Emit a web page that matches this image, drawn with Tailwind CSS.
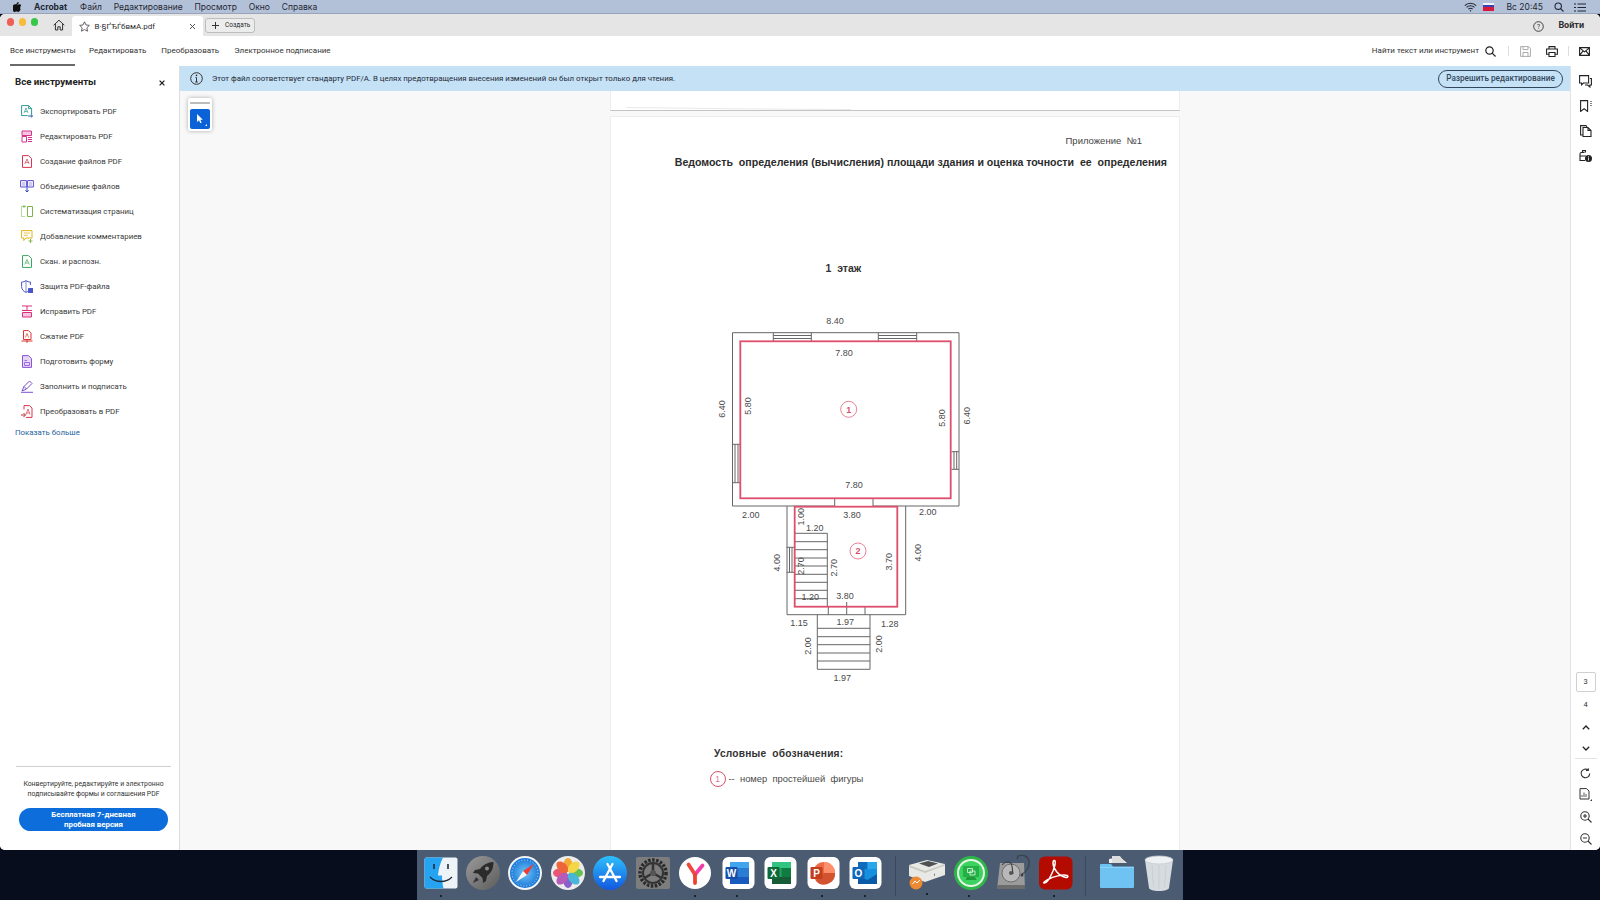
<!DOCTYPE html>
<html lang="ru">
<head>
<meta charset="utf-8">
<title>Acrobat</title>
<script src="https://cdn.jsdelivr.net/npm/@tailwindcss/browser@4"></script>
</head>
<body>
<div class="w-[1600px] h-[900px] overflow-hidden flex flex-col bg-[#070d1c] font-['Roboto',sans-serif] text-[#2c2c2c]">

  <!-- macOS menu bar -->
  <header class="h-[14px] shrink-0 bg-[#b3c1d8] border-b border-[#97a4b9] pt-[1px] flex items-center text-[8.500px] leading-none text-[#1f2733] font-['Inter',sans-serif]">
    <svg class="ml-[13px] w-[8px] h-[10px]" viewBox="0 0 16 20"><path d="M11.3 0c.2 1.5-.4 2.8-1.2 3.8-.9 1-2.1 1.6-3.2 1.5-.2-1.4.5-2.9 1.2-3.7C9 .7 10.300 0 11.300 0zM15.300 14.600c-.5 1.100-.7 1.600-1.300 2.500-.9 1.300-2.100 2.900-3.600 2.900-1.300 0-1.700-.8-3.500-.8s-2.200.8-3.500.8c-1.500 0-2.600-1.400-3.500-2.700C-1.500 13.700-1.700 9.400 0 7.100 1.200 5.500 3 4.600 4.600 4.600c1.700 0 2.800 1 4.200 1 1.400 0 2.200-1 4.200-1 1.500 0 3.100.8 4.200 2.200-3.700 2-3.100 7.300-1.900 7.800z" fill="#111"/></svg>
    <span class="ml-[13px] font-bold">Acrobat</span>
    <nav class="ml-[13px] flex gap-[11.800px]"><span>Файл</span><span>Редактирование</span><span>Просмотр</span><span>Окно</span><span>Справка</span></nav>
    <div class="ml-auto flex items-center">
      <svg class="w-[13px] h-[10px]" viewBox="0 0 13 10" fill="none" stroke="#1f2733" stroke-width="1.100"><path d="M.8 3.600a8 8 0 0 1 11.400 0M2.600 5.400a5.400 5.400 0 0 1 7.800 0M4.400 7.100a2.900 2.900 0 0 1 4.200 0"/><circle cx="6.500" cy="8.800" r=".7" fill="#1f2733" stroke="none"/></svg>
      <span class="ml-[6px] w-[11px] h-[8px] flex flex-col"><span class="h-[2px] bg-[#f2f2f6]"></span><span class="h-[2px] bg-[#3b3fb0]"></span><span class="h-[4px] bg-[#d8193a]"></span></span>
      <span class="ml-[13px]">Вс 20:45</span>
      <svg class="ml-[11px] w-[10px] h-[10px]" viewBox="0 0 10 10" fill="none" stroke="#1f2733" stroke-width="1.100"><circle cx="4.200" cy="4.200" r="3.200"/><path d="M6.600 6.600L9.500 9.500"/></svg>
      <svg class="ml-[10px] mr-[14px] w-[12px] h-[9px]" viewBox="0 0 12 9" stroke="#1f2733" stroke-width="1.100"><path d="M3.500 1H12M3.500 4.500H12M3.500 8H12M0 1H2M0 4.500H2M0 8H2"/></svg>
    </div>
  </header>

  <!-- Acrobat window -->
  <div class="h-[836px] shrink-0 flex flex-col rounded-[5px] overflow-hidden bg-white">
    <!-- tab bar -->
    <div class="h-[22px] shrink-0 bg-[#e5e5e5] flex items-center relative">
      <span class="ml-[6.500px] w-[7.500px] h-[7.500px] -mt-[6px] rounded-full bg-[#ee5f58]"></span>
      <span class="ml-[4.500px] w-[7.500px] h-[7.500px] -mt-[6px] rounded-full bg-[#f6bc3a]"></span>
      <span class="ml-[4.500px] w-[7.500px] h-[7.500px] -mt-[6px] rounded-full bg-[#37c64a]"></span>
      <svg class="ml-[15px] w-[12px] h-[12px]" viewBox="0 0 12 12" fill="none" stroke="#333" stroke-width="1"><path d="M.7 6.200L6 1.200l5.300 5M2.400 5v6h2.400V7.800h2.400V11h2.400V5"/></svg>
      <div class="ml-[7px] w-[131px] h-[20px] self-end bg-white rounded-t-[3px] flex items-center text-[8px]">
        <svg class="ml-[7px] w-[11px] h-[11px]" viewBox="0 0 12 12" fill="none" stroke="#444" stroke-width=".9"><path d="M6 .9l1.600 3.400 3.700.5-2.700 2.600.7 3.700L6 9.300l-3.300 1.800.7-3.700L.7 4.800l3.700-.5z"/></svg>
        <span class="ml-[4.500px] pt-[1px]">В·§ҐЂЃбвмА.pdf</span>
        <svg class="ml-auto mr-[7px] w-[7px] h-[7px]" viewBox="0 0 7 7" stroke="#555" stroke-width="1"><path d="M1 1l5 5M6 1L1 6"/></svg>
      </div>
      <div class="ml-[2px] w-[50px] h-[15px] rounded-[3px] border border-[#bdbdbd] bg-[#ececec] flex items-center text-[6.500px]">
        <svg class="ml-[6px] w-[7px] h-[7px]" viewBox="0 0 7 7" stroke="#333" stroke-width="1"><path d="M3.500 0v7M0 3.500h7"/></svg>
        <span class="ml-[6px] pt-[1px]">Создать</span>
      </div>
      <div class="ml-auto flex items-center pt-[2px]">
        <svg class="w-[11px] h-[11px]" viewBox="0 0 11 11" fill="none" stroke="#333" stroke-width=".9"><circle cx="5.500" cy="5.500" r="4.800"/><text x="5.500" y="7.800" font-size="6.500" text-anchor="middle" fill="#333" stroke="none">?</text></svg>
        <span class="ml-[14px] mr-[16px] text-[9px] font-bold">Войти</span>
      </div>
    </div>

    <!-- toolbar -->
    <div class="h-[30px] shrink-0 bg-white flex items-center text-[8px] text-[#333]">
      <div class="ml-[10px] h-full w-[65px] flex items-center border-b-[2px] border-[#6a6a6a] pt-[2px] whitespace-nowrap">Все инструменты</div>
      <span class="ml-[14px]">Редактировать</span>
      <span class="ml-[15px]">Преобразовать</span>
      <span class="ml-[15px]">Электронное подписание</span>
      <div class="ml-auto flex items-center">
        <span>Найти текст или инструмент</span>
        <svg class="ml-[6px] w-[11px] h-[11px]" viewBox="0 0 11 11" fill="none" stroke="#222" stroke-width="1.200"><circle cx="4.500" cy="4.500" r="3.700"/><path d="M7.200 7.200L10.500 10.500"/></svg>
        <span class="ml-[12px] w-px h-[10px] bg-[#ddd]"></span>
        <svg class="ml-[11px] w-[11px] h-[11px]" viewBox="0 0 11 11" fill="none" stroke="#aaa" stroke-width="1"><path d="M.6.6h8l1.800 1.800v8H.6zM3 .6v3h5v-3M3 10.400V6.500h5v3.900"/></svg>
        <svg class="ml-[15px] w-[12px] h-[11px]" viewBox="0 0 12 11" fill="none" stroke="#222" stroke-width="1.100"><path d="M3 3V.6h6V3M3 8.200H.6V3h10.800v5.200H9M3 6.500h6v4H3z"/></svg>
        <span class="ml-[10px] w-px h-[10px] bg-[#ddd]"></span>
        <svg class="ml-[10px] mr-[10px] w-[11px] h-[9px]" viewBox="0 0 11 9" fill="none" stroke="#222" stroke-width="1.100"><path d="M.6.6h9.800v7.800H.6zM.6.9l4.900 4 4.900-4M.6 8.200l3.400-4M10.400 8.200l-3.400-4"/></svg>
      </div>
    </div>

    <!-- main -->
    <div class="flex-1 min-h-0 flex">
      <!-- left tool panel -->
      <aside class="w-[180px] shrink-0 border-r border-[#dedede] flex flex-col bg-white text-[7.850px] text-[#3a3a3a]">
        <div class="h-[33px] shrink-0 flex items-center pl-[15px] pr-[14px] text-[9.700px] font-bold text-[#222]">
          <span>Все инструменты</span>
          <svg class="ml-auto w-[6px] h-[6px]" viewBox="0 0 6 6" stroke="#222" stroke-width="1.300"><path d="M.6.6l4.800 4.800M5.400.6L.6 5.400"/></svg>
        </div>
        <div class="h-[25px] flex items-center pl-[21px] gap-[7px]"><svg class="w-[12px] h-[13px]" viewBox="0 0 12 13" fill="none" stroke="#2f9d94"><path d="M.6.600h7l3 3v6M.6.600v10h6M7.600 .6v3h3"/><path d="M7 11h4.500M9.800 9.500l1.700 1.500-1.700 1.500" stroke="#2a5f9f"/><path d="M3 8l2-5 2 5M3.800 6.500h2.500" stroke-width=".7"/></svg><span>Экспортировать PDF</span></div>
        <div class="h-[25px] flex items-center pl-[21px] gap-[7px]"><svg class="w-[12px] h-[13px]" viewBox="0 0 12 13" fill="none" stroke="#d2358e"><path d="M1 1h9.500v4.500H1z" fill="#f6c6df"/><path d="M1 6.500h4.500v5.500H1zM7 7.500h4M7 9.500h4M7 11.500h4"/></svg><span>Редактировать PDF</span></div>
        <div class="h-[25px] flex items-center pl-[21px] gap-[7px]"><svg class="w-[12px] h-[13px]" viewBox="0 0 12 13" fill="none" stroke="#d8354f"><path d="M1.500.6h6l3 3v8.800h-9z"/><path d="M3.800 9l2.200-5 2.200 5M4.600 7.400h2.800" stroke-width=".7"/></svg><span>Создание файлов PDF</span></div>
        <div class="h-[25px] flex items-center pl-[20px] gap-[6px]"><svg class="w-[14px] h-[13px]" viewBox="0 0 14 13" fill="none" stroke="#5a4fd0"><path d="M.6.600h5.800v6.400H.6zM7.600.6h5.800v6.400H7.600z"/><path d="M2 3h3M2 5h3M9 3h3M9 5h3" stroke-width=".6"/><path d="M7 7v5M5.300 10.300L7 12l1.700-1.700" stroke="#3147b8"/></svg><span>Объединение файлов</span></div>
        <div class="h-[25px] flex items-center pl-[21px] gap-[7px]"><svg class="w-[12px] h-[13px]" viewBox="0 0 12 13" fill="none" stroke="#7ab648"><path d="M6.500 1.500h5v10h-5z"/><path d="M4.500 1.500h-4v10h4" stroke-dasharray="1 1"/><path d="M3 0v3M1.500 1.500h3" stroke-width=".8"/></svg><span>Систематизация страниц</span></div>
        <div class="h-[25px] flex items-center pl-[21px] gap-[7px]"><svg class="w-[12px] h-[13px]" viewBox="0 0 12 13" fill="none" stroke="#e2b419"><path d="M.6.600h10.400v7.400H5L2.800 10.500V8H.6z"/><path d="M2.800 3h6M2.800 5.300h4" stroke-width=".8"/><path d="M9.500 9v4M7.500 11h4" stroke="#7bb23f" stroke-width=".9"/></svg><span>Добавление комментариев</span></div>
        <div class="h-[25px] flex items-center pl-[21px] gap-[7px]"><svg class="w-[12px] h-[13px]" viewBox="0 0 12 13" fill="none" stroke="#3ca65f"><path d="M1.500.6h6l3 3v8.800h-9z"/><path d="M3.800 9.500l2.200-5 2.200 5M4.600 8h2.800" stroke-width=".7"/></svg><span>Скан. и распозн.</span></div>
        <div class="h-[25px] flex items-center pl-[21px] gap-[7px]"><svg class="w-[12px] h-[13px]" viewBox="0 0 12 13" fill="none" stroke="#4a55c8"><path d="M5 .6c-1.300 1-2.800 1.400-4.400 1.400v4.500c0 3 2 5 4.400 5.900 .9-.3 1.600-.8 2.200-1.300"/><path d="M5 .6c1.300 1 2.800 1.400 4.400 1.400v3"/><path d="M5 .6v11.800" stroke-width=".7"/><path d="M7.500 8.500h4.500v4H7.500z" fill="#4a55c8"/></svg><span>Защита PDF-файла</span></div>
        <div class="h-[25px] flex items-center pl-[21px] gap-[7px]"><svg class="w-[12px] h-[13px]" viewBox="0 0 12 13" fill="none" stroke="#d6337c"><path d="M1 1h10M1 5.500h10M6 1v4.500"/><path d="M1.500 7.500h9v4.500h-9z" fill="#f6c6df"/></svg><span>Исправить PDF</span></div>
        <div class="h-[25px] flex items-center pl-[21px] gap-[7px]"><svg class="w-[12px] h-[13px]" viewBox="0 0 12 13" fill="none" stroke="#d8352f"><path d="M2.500.6h5l2.500 2.500v6.400h-7.500z"/><path d="M4.300 7.500L6 3.500l1.700 4" stroke-width=".7"/><path d="M.5 11h11M6 9.500v3.400" /></svg><span>Сжатие PDF</span></div>
        <div class="h-[25px] flex items-center pl-[21px] gap-[7px]"><svg class="w-[12px] h-[13px]" viewBox="0 0 12 13" fill="none" stroke="#8b54d4"><path d="M1.500.6h6l3 3v8.800h-9z" fill="#e4d6f7"/><path d="M3.500 7.500h5v3h-5zM3.500 5.500h2.500" stroke-width=".8"/></svg><span>Подготовить форму</span></div>
        <div class="h-[25px] flex items-center pl-[21px] gap-[7px]"><svg class="w-[12px] h-[13px]" viewBox="0 0 12 13" fill="none" stroke="#7a4fd0"><path d="M1 11L3 6.500 8.500 1l2.500 2.500-5.500 5.500z"/><path d="M3 6.500l2.500 2.500M0 12.300h12"/></svg><span>Заполнить и подписать</span></div>
        <div class="h-[25px] flex items-center pl-[21px] gap-[7px]"><svg class="w-[12px] h-[13px]" viewBox="0 0 12 13" fill="none" stroke="#d8354f"><path d="M3 4.500V.6h5.500L11 3v9.400H5"/><path d="M5 9.500L7 4l2 5.500M5.700 8h2.600" stroke-width=".7"/><path d="M0 10h4M2.500 8l2 2-2 2" stroke="#b82e2e"/></svg><span>Преобразовать в PDF</span></div>
        <div class="h-[17px] flex items-center pl-[15px] text-[#1d5f9c]">Показать больше</div>
        <div class="mt-auto ml-[16px] mr-[8px] border-t border-[#cfcfcf] pt-[13px] pb-[19px]">
          <p class="text-[6.850px] leading-[9.500px] text-center text-[#333] whitespace-nowrap">Конвертируйте, редактируйте и электронно<br>подписывайте формы и соглашения PDF</p>
          <div class="mt-[9px] mx-[3px] h-[23px] rounded-[11.500px] bg-[#0d6edb] flex items-center justify-center text-center text-[7.900px] leading-[10px] font-bold text-white">Бесплатная 7-дневная<br>пробная версия</div>
        </div>
      </aside>

      <!-- centre -->
      <section class="flex-1 min-w-0 flex flex-col">
        <div class="h-[25px] shrink-0 bg-[#c5e1f6] flex items-center text-[7.870px] text-[#1f2a36]">
          <svg class="ml-[10px] w-[13px] h-[13px]" viewBox="0 0 13 13" fill="none" stroke="#333" stroke-width="1"><circle cx="6.500" cy="6.500" r="5.800"/><path d="M6.500 5.500v4.500M5.200 10h2.600M5.500 5.500h1" stroke-width="1"/><circle cx="6.500" cy="3.400" r=".8" fill="#333" stroke="none"/></svg>
          <span class="ml-[9px]">Этот файл соответствует стандарту PDF/A. В целях предотвращения внесения изменений он был открыт только для чтения.</span>
          <span class="ml-auto mr-[7px] w-[125px] h-[18px] rounded-full border border-[#33475b] flex items-center justify-center text-[8.200px] font-medium text-[#33475b]">Разрешить редактирование</span>
        </div>
        <div class="flex-1 min-h-0 relative bg-[#f8f8f8] flex flex-col gap-[5px] pl-[430px] overflow-hidden">
          <!-- floating select tool -->
          <div class="absolute left-[8px] top-[7px] w-[24px] h-[33px] bg-white rounded-[2px] shadow-[0_0_4px_rgba(0,0,0,0.3)] flex flex-col items-center">
            <span class="mt-[3.500px] w-[20px] h-[2px] bg-[#bcbcbc]"></span>
            <span class="mt-[5px] w-[20px] h-[20px] rounded-[2px] bg-[#0b62d6] flex items-center justify-center">
              <svg class="w-[16px] h-[16px]" viewBox="0 0 16 16" fill="#fff"><path d="M5 3v8l2-1.800 1.300 3 1.300-.6-1.300-2.900h2.500z"/><path d="M15 13v2h-2z"/></svg>
            </span>
          </div>
          <!-- previous page tail -->
          <div class="w-[570px] h-[20px] shrink-0 bg-white border-x border-[#ececec] border-b border-b-[#c4c4c4]">
            <svg class="block w-[568px] h-[19px]" viewBox="0 0 568 19" fill="none" stroke-width=".8"><path d="M15 16.500C70 17 110 18 240 18.500" stroke="#e2e2e2"/></svg>
          </div>
          <!-- current page -->
          <div class="w-[570px] flex-1 bg-white border border-[#ececec] border-b-0 font-['Liberation_Sans',sans-serif] text-[#333] overflow-hidden">
            <p class="mt-[18px] h-[12px] leading-[12px] text-[9.500px] text-right pr-[37px] text-[#444]">Приложение&nbsp; №1</p>
            <p class="mt-[9px] h-[12px] leading-[12px] text-[10.600px] font-bold text-right pr-[12px] text-[#2c2c2c] whitespace-nowrap">Ведомость&nbsp; определения (вычисления) площади здания и оценка точности&nbsp; ее&nbsp; определения</p>
            <p class="mt-[94px] ml-[214.500px] h-[12px] leading-[12px] text-[10.500px] font-bold text-[#333] whitespace-nowrap">1&nbsp; этаж</p>
            <svg class="block mt-[6px] w-[570px] h-[415px] font-['Liberation_Sans',sans-serif]" viewBox="611 280 570 415" fill="none" stroke-width="1">
              <g stroke="#666">
                <path d="M787 506H732.500V332.700H959V506H905.700"/>
                <path d="M787 506V614.700H905.700V506M834.700 506H787M873 506H905.700"/>
                <path d="M773.300 332.700v8.600M811.300 332.700v8.600M773.300 335.500h38M773.300 338.500h38M878.300 332.700v8.600M916.700 332.700v8.600M878.300 335.500h38.400M878.300 338.500h38.400"/>
                <path d="M732.500 444.300h8M732.500 482.700h8M735 444.300v38.400M738 444.300v38.400"/>
                <path d="M951.500 451.700H959M951.500 469.300H959M954 451.700v17.600M956.700 451.700v17.600"/>
                <path d="M834.700 498.500V506M873 498.500V506"/>
                <path d="M786.700 547.300h8M786.700 572.300h8M789.500 547.300v25M792 547.300v25"/>
                <path d="M827.300 533.300V606.700M794.700 533.300h32.600M794.700 541.700h32.600M794.700 549.700h32.600M794.700 558h32.600M794.700 566h32.600M794.700 574.300h32.600M794.700 582.300h32.600M794.700 590.300h32.600M794.700 598.700h32.600"/>
                <path d="M828.300 606.700v8M865 606.700v8M846.700 602v12.700"/>
                <path d="M817.300 614.700V669.300H870V614.700M817.300 628.300H870M817.300 636.700H870M817.300 644.700H870M817.300 653H870M817.300 661H870"/>
              </g>
              <g stroke="#dd4f6c" stroke-width="1.800">
                <rect x="740.300" y="341.300" width="210.400" height="157"/>
                <rect x="794.700" y="506.700" width="102.600" height="100"/>
              </g>
              <g stroke="#dd4f6c" stroke-width=".7">
                <circle cx="848.700" cy="409.300" r="8"/>
                <circle cx="858" cy="551" r="8"/>
              </g>
              <g font-size="9" fill="#dd4f6c" text-anchor="middle" font-weight="bold">
                <text x="848.700" y="412.500">1</text>
                <text x="858" y="554.200">2</text>
              </g>
              <g font-size="9" fill="#4a4a4a" text-anchor="middle">
                <text x="835" y="324">8.40</text>
                <text x="844" y="356">7.80</text>
                <text x="854" y="488">7.80</text>
                <text x="750.700" y="517.700">2.00</text>
                <text x="852" y="517.700">3.80</text>
                <text x="927.700" y="514.700">2.00</text>
                <text x="814.700" y="531.300">1.20</text>
                <text x="810.300" y="600.300">1.20</text>
                <text x="845" y="599">3.80</text>
                <text x="799" y="626.300">1.15</text>
                <text x="845.300" y="624.700">1.97</text>
                <text x="889.700" y="627">1.28</text>
                <text x="842.300" y="681.300">1.97</text>
                <text transform="translate(725 409) rotate(-90)">6.40</text>
                <text transform="translate(751 406) rotate(-90)">5.80</text>
                <text transform="translate(945 418) rotate(-90)">5.80</text>
                <text transform="translate(970 415.700) rotate(-90)">6.40</text>
                <text transform="translate(804 516.700) rotate(-90)">1.00</text>
                <text transform="translate(779.700 562.700) rotate(-90)">4.00</text>
                <text transform="translate(804 566) rotate(-90)">2.70</text>
                <text transform="translate(837.300 567.700) rotate(-90)">2.70</text>
                <text transform="translate(892.300 561.700) rotate(-90)">3.70</text>
                <text transform="translate(921.300 552.700) rotate(-90)">4.00</text>
                <text transform="translate(810.700 646) rotate(-90)">2.00</text>
                <text transform="translate(882 644) rotate(-90)">2.00</text>
              </g>
            </svg>
            <p class="mt-[53px] ml-[103px] h-[12px] leading-[12px] text-[10.200px] font-bold tracking-[0.2px] text-[#333] whitespace-nowrap">Условные&nbsp; обозначения:</p>
            <div class="mt-[11px] ml-[98.500px] h-[16px] flex items-center text-[9.400px] text-[#4a4a4a] whitespace-nowrap">
              <span class="w-[16px] h-[16px] rounded-full border-[1.300px] border-[#dd4f6c] flex items-center justify-center text-[8.500px] text-[#dd7a8e]">1</span>
              <span class="ml-[3px]">--&nbsp; номер&nbsp; простейшей&nbsp; фигуры</span>
            </div>
          </div>
        </div>
      </section>

      <!-- right rail -->
      <aside class="w-[30px] shrink-0 border-l border-[#e2e2e2] bg-white flex flex-col items-center text-[7.500px] text-[#333]">
        <svg class="mt-[9px] w-[13px] h-[13px]" viewBox="0 0 13 13" fill="none" stroke="#222" stroke-width="1.100"><path d="M.6.600h9v7.400H4.500L2.600 9.800V8H.6z"/><path d="M10.800 3.500h1.600v6.500h-1.500v2l-2.200-2H6"/></svg>
        <svg class="mt-[12px] w-[12px] h-[12px]" viewBox="0 0 12 12" fill="none" stroke="#222" stroke-width="1.100"><path d="M.6.600h7v10.800L4.100 8.700.6 11.400z"/><path d="M10 1.500h2M10 3.500h2M10 5.500h2" stroke-width=".8" stroke="#666"/></svg>
        <svg class="mt-[13px] w-[12px] h-[12px]" viewBox="0 0 12 12" fill="none" stroke="#222" stroke-width="1.100"><path d="M3 10H.6V.6h5.400L7 2"/><path d="M3 2.500h5l3 3v6H3zM8 2.500v3h3"/></svg>
        <svg class="mt-[13px] w-[13px] h-[12px]" viewBox="0 0 13 12" fill="none" stroke="#222" stroke-width="1.100"><path d="M5.500 2.500H2.500C1.500 2.500 1 3 1 4v6.500h5M3.500 2.500V.6h3v2M1 6h6"/><circle cx="9.500" cy="8.500" r="3.500" fill="#222" stroke="none"/><path d="M9.500 7.500v3M9.500 6v.8" stroke="#fff" stroke-width=".8"/></svg>
        <div class="mt-[510px] w-[20px] h-[20px] border border-[#d0d0d0] rounded-[2px] flex items-center justify-center">3</div>
        <div class="mt-[7px] h-[12px] flex items-center">4</div>
        <svg class="mt-[14px] w-[8px] h-[5px]" viewBox="0 0 8 5" fill="none" stroke="#222" stroke-width="1.300"><path d="M.8 4.200L4 1l3.200 3.200"/></svg>
        <svg class="mt-[16px] w-[8px] h-[5px]" viewBox="0 0 8 5" fill="none" stroke="#222" stroke-width="1.300"><path d="M.8.800L4 4l3.200-3.200"/></svg>
        <span class="mt-[7px] w-[22px] h-px bg-[#e2e2e2]"></span>
        <svg class="mt-[9px] w-[11px] h-[11px]" viewBox="0 0 11 11" fill="none" stroke="#333" stroke-width="1.100"><path d="M9.700 5.500A4.300 4.300 0 1 1 8 2"/><path d="M8.300 .3V2.500H6" /></svg>
        <svg class="mt-[9px] w-[13px] h-[13px]" viewBox="0 0 13 13" fill="none" stroke="#333" stroke-width="1"><path d="M1 .6h6.500L10 3v8H1z"/><path d="M3 9V7M5 9V4.500M7 9V6" stroke-width=".8"/><path d="M13 11v2h-2z" fill="#333" stroke="none"/></svg>
        <svg class="mt-[10px] w-[12px] h-[12px]" viewBox="0 0 12 12" fill="none" stroke="#333" stroke-width="1.100"><circle cx="5" cy="5" r="4.200"/><path d="M8 8l3.500 3.500M3 5h4M5 3v4"/></svg>
        <svg class="mt-[10px] w-[12px] h-[12px]" viewBox="0 0 12 12" fill="none" stroke="#333" stroke-width="1.100"><circle cx="5" cy="5" r="4.200"/><path d="M8 8l3.500 3.500M3 5h4"/></svg>
      </aside>
    </div>
  </div>

  <!-- Dock -->
  <footer class="h-[50px] shrink-0 flex justify-center">
    <div class="w-[766px] h-full bg-[#4a5b72] flex px-[2.500px] font-['Liberation_Sans',sans-serif]">
      <div class="w-[42.400px] flex flex-col items-center pt-[6px]">
        <svg class="w-[34px] h-[34px]" viewBox="0 0 34 34"><rect width="33" height="31" x=".5" y="1.500" rx="2" fill="#eef3f8"/><path d="M2.500 1.500H19c-3 6-4.500 12-5 18h4c0 4 .5 9 1.500 13h-17a2 2 0 0 1-2-2v-27a2 2 0 0 1 2-2z" fill="#26a4f2"/><path d="M10 8v5M24 8v5" stroke="#1f2d3d" stroke-width="1.600"/><path d="M6 21c6 6 16 6 22 0" stroke="#1f2d3d" stroke-width="1.300" fill="none"/></svg>
        <span class="mt-[5px] w-[2px] h-[2px] rounded-full bg-[#111]"></span>
      </div>
      <div class="w-[42.400px] flex flex-col items-center pt-[6px]">
        <svg class="w-[34px] h-[34px]" viewBox="0 0 34 34"><defs><linearGradient id="lp" x1="0" y1="0" x2="1" y2="1"><stop offset="0" stop-color="#9a9a9a"/><stop offset="1" stop-color="#5c5c5c"/></linearGradient></defs><circle cx="17" cy="17" r="17" fill="url(#lp)"/><path d="M27 6c-6 .5-10 3-13 7l-5 1-2 3 5 .5 4.500 4.500.5 5 3-2 1-5c4-3 6.500-7 6.500-14z" fill="#2b2b2b"/><path d="M10 21l-3 6 6-3z" fill="#333"/><circle cx="21" cy="12.500" r="2" fill="#8a8a8a"/></svg>
      </div>
      <div class="w-[42.400px] flex flex-col items-center pt-[6px]">
        <svg class="w-[34px] h-[34px]" viewBox="0 0 34 34"><defs><radialGradient id="sf"><stop offset="0" stop-color="#6ec4f7"/><stop offset="1" stop-color="#1a78d8"/></radialGradient></defs><circle cx="17" cy="17" r="17" fill="#f2f4f6"/><circle cx="17" cy="17" r="15" fill="url(#sf)"/><circle cx="17" cy="17" r="13" fill="none" stroke="#d8ecfb" stroke-width=".8" stroke-dasharray="1 2"/><path d="M26 8L15 15l4 4z" fill="#ef3b33"/><path d="M8 26l11-7-4-4z" fill="#f4f4f4"/></svg>
      </div>
      <div class="w-[42.400px] flex flex-col items-center pt-[6px]">
        <svg class="w-[34px] h-[34px]" viewBox="0 0 34 34"><circle cx="17" cy="17" r="17" fill="#ececec"/><g opacity=".92"><ellipse cx="17" cy="9" rx="4.500" ry="7" fill="#f5a623"/><ellipse cx="17" cy="25" rx="4.500" ry="7" fill="#7f56c8"/><ellipse cx="9" cy="17" rx="7" ry="4.500" fill="#e84a6a"/><ellipse cx="25" cy="17" rx="7" ry="4.500" fill="#5bbf4a"/><ellipse cx="11.300" cy="11.300" rx="4.500" ry="7" transform="rotate(-45 11.300 11.300)" fill="#ef5a2e"/><ellipse cx="22.700" cy="11.300" rx="4.500" ry="7" transform="rotate(45 22.700 11.300)" fill="#f4d63a"/><ellipse cx="11.300" cy="22.700" rx="4.500" ry="7" transform="rotate(45 11.300 22.700)" fill="#b14fb5"/><ellipse cx="22.700" cy="22.700" rx="4.500" ry="7" transform="rotate(-45 22.700 22.700)" fill="#3ab2d8"/></g></svg>
      </div>
      <div class="w-[42.400px] flex flex-col items-center pt-[6px]">
        <svg class="w-[34px] h-[34px]" viewBox="0 0 34 34"><defs><linearGradient id="as" x1="0" y1="0" x2="0" y2="1"><stop offset="0" stop-color="#2ec0fb"/><stop offset="1" stop-color="#1258e0"/></linearGradient></defs><circle cx="17" cy="17" r="17" fill="url(#as)"/><path d="M19.500 8L10.500 25M14.500 8L23.500 25M7 21h20" stroke="#fff" stroke-width="2.300" stroke-linecap="round" fill="none"/></svg>
      </div>
      <div class="w-[42.400px] flex flex-col items-center pt-[6px]">
        <svg class="w-[34px] h-[34px]" viewBox="0 0 34 34" fill="none"><rect width="34" height="32" y="1" rx="2" fill="#7d7d7d"/><circle cx="17" cy="17" r="13" stroke="#2a2a2a" stroke-width="3.500" stroke-dasharray="2.500 1.500"/><circle cx="17" cy="17" r="10" stroke="#333" stroke-width="2"/><path d="M17 17V7.500M17 17l8.500 5M17 17l-8.500 5" stroke="#333" stroke-width="2.500"/><circle cx="17" cy="17" r="3" fill="#555"/></svg>
      </div>
      <div class="w-[42.400px] flex flex-col items-center pt-[6px]">
        <svg class="w-[34px] h-[34px]" viewBox="0 0 34 34" fill="none"><circle cx="17" cy="17" r="16" fill="#fff"/><path d="M17 18.500L10.500 8.500" stroke="#f0493a" stroke-width="3.800" stroke-linecap="round"/><path d="M17 18.500L24.500 9.500" stroke="#f03fa8" stroke-width="3.800" stroke-linecap="round"/><path d="M17 18.500V27" stroke="#f0402f" stroke-width="3.800" stroke-linecap="round"/></svg>
        <span class="mt-[5px] w-[2px] h-[2px] rounded-full bg-[#111]"></span>
      </div>
      <div class="w-[42.400px] flex flex-col items-center pt-[6px]">
        <svg class="ml-[3px] w-[34px] h-[34px]" viewBox="0 0 34 34"><rect x=".5" y="1" width="32" height="32" rx="6" fill="#fff"/><rect x="8" y="6" width="19" height="22" rx="1" fill="#2b7cd3"/><rect x="8" y="6" width="19" height="6" fill="#41a5ee"/><rect x="8" y="21" width="19" height="7" fill="#185abd"/><rect x="3.500" y="11" width="12" height="12" rx="1" fill="#144ea8"/><text x="9.500" y="20.500" font-size="10" font-weight="bold" fill="#fff" text-anchor="middle">W</text></svg>
        <span class="mt-[5px] w-[2px] h-[2px] rounded-full bg-[#111]"></span>
      </div>
      <div class="w-[42.400px] flex flex-col items-center pt-[6px]">
        <svg class="ml-[3px] w-[34px] h-[34px]" viewBox="0 0 34 34"><rect x=".5" y="1" width="32" height="32" rx="6" fill="#fff"/><rect x="8" y="6" width="19" height="22" rx="1" fill="#21a366"/><rect x="8" y="6" width="19" height="6" fill="#33c481"/><rect x="8" y="21" width="19" height="7" fill="#185c37"/><rect x="17.500" y="12" width="9.500" height="9" fill="#107c41"/><rect x="3.500" y="11" width="12" height="12" rx="1" fill="#0f6a3a"/><text x="9.500" y="20.500" font-size="10" font-weight="bold" fill="#fff" text-anchor="middle">X</text></svg>
      </div>
      <div class="w-[42.400px] flex flex-col items-center pt-[6px]">
        <svg class="ml-[3px] w-[34px] h-[34px]" viewBox="0 0 34 34"><rect x=".5" y="1" width="32" height="32" rx="6" fill="#fff"/><circle cx="17" cy="17" r="11" fill="#ed6c47"/><path d="M17 17V6a11 11 0 0 1 11 11z" fill="#ff8f6b"/><path d="M8.500 24.500A11 11 0 0 0 28 17H17z" fill="#d35230"/><rect x="3.500" y="11" width="12" height="12" rx="1" fill="#c43e1c"/><text x="9.500" y="20.500" font-size="10" font-weight="bold" fill="#fff" text-anchor="middle">P</text></svg>
        <span class="mt-[5px] w-[2px] h-[2px] rounded-full bg-[#111]"></span>
      </div>
      <div class="w-[42.400px] flex flex-col items-center pt-[6px]">
        <svg class="ml-[3px] w-[34px] h-[34px]" viewBox="0 0 34 34"><rect x=".5" y="1" width="32" height="32" rx="6" fill="#fff"/><rect x="9" y="6" width="19" height="22" rx="1" fill="#1490df"/><rect x="9" y="6" width="9.500" height="7" fill="#0f6cbd"/><rect x="18.500" y="6" width="9.500" height="7" fill="#28a8ea"/><path d="M9 20l9.500 4 9.500-6v10H9z" fill="#0a5aa8"/><rect x="3.500" y="11" width="12" height="12" rx="1" fill="#0f66b8"/><text x="9.500" y="20.500" font-size="10" font-weight="bold" fill="#fff" text-anchor="middle">O</text></svg>
        <span class="mt-[5px] w-[2px] h-[2px] rounded-full bg-[#111]"></span>
      </div>
      <div class="w-[20px] flex justify-center pt-[6px] pb-[4px]"><span class="w-px bg-[#39485c]"></span></div>
      <div class="w-[42.400px] flex flex-col items-center pt-[4px]">
        <svg class="w-[40px] h-[36px]" viewBox="0 0 40 36"><path d="M2 11L20 6l18 4v11L18 28 2 22z" fill="#e8e8e4"/><path d="M2 11l16 6 20-7v1.500L18 19 2 13z" fill="#c9c9c4"/><path d="M12 9.500l9-2.500 10 2.500-9 3.500z" fill="#4d5054"/><path d="M27 20l1-.4v2l-1 .4z" fill="#777"/><circle cx="9" cy="29" r="6.500" fill="#ee8a32"/><path d="M5.500 30l2.500-3 2 2 3-3" stroke="#fff" stroke-width="1" fill="none"/></svg>
        <span class="mt-[3px] w-[2px] h-[2px] rounded-full bg-[#111]"></span>
      </div>
      <div class="w-[42.400px] flex flex-col items-center pt-[6px]">
        <svg class="ml-[3px] w-[34px] h-[34px]" viewBox="0 0 34 34"><circle cx="17" cy="17" r="17" fill="#2fb64a"/><circle cx="17" cy="17" r="14" fill="#e6f7e6"/><circle cx="17" cy="17" r="12" fill="#3bd25f"/><path d="M9 10h16v11H9z" fill="#23b146"/><path d="M13 21h8l1.500 3h-11z" fill="#1e9c3c"/><path d="M13.500 12.500h5v4h-5zM16 15h5v4h-5z" fill="none" stroke="#e6f7e6" stroke-width=".8"/></svg>
        <span class="mt-[5px] w-[2px] h-[2px] rounded-full bg-[#111]"></span>
      </div>
      <div class="w-[42.400px] flex flex-col items-center pt-[3px]">
        <svg class="ml-[3px] w-[38px] h-[38px]" viewBox="0 0 38 38" fill="none"><path d="M6 10h24l1 26H3z" fill="#9b9b9b"/><circle cx="17" cy="20" r="9" fill="#b8b8b8" stroke="#6d6d6d"/><circle cx="17" cy="20" r="2" fill="#555"/><path d="M3 32h28v4H3z" fill="#6c6c6c"/><path d="M24 3c5-2 10 0 11 5 1 6-3 11-7 13M24 3l-1 3M8 12c4-5 9-4 10 1l1 8" stroke="#3a3f46" stroke-width="1.100"/><circle cx="28" cy="22" r="1.500" fill="#3a3f46"/></svg>
      </div>
      <div class="w-[42.400px] flex flex-col items-center pt-[6px]">
        <svg class="ml-[3px] w-[34px] h-[34px]" viewBox="0 0 34 34" fill="none"><rect x="0" y="0.500" width="33.500" height="33" rx="6" fill="#b30b00"/><path d="M5 27c3 1 6-5 9-12 1.500-4 2.500-9 2-10-.7-1-2-.5-2 2 0 6 6 13 13 14.500 2 .4 2.500-1.500 1-2-4-1.300-14 1-19 4-3 1.800-5 3-4 3.500z" stroke="#fff" stroke-width="1.500"/></svg>
        <span class="mt-[5px] w-[2px] h-[2px] rounded-full bg-[#111]"></span>
      </div>
      <div class="w-[20px] flex justify-center pt-[6px] pb-[4px]"><span class="w-px bg-[#39485c]"></span></div>
      <div class="w-[42.400px] flex flex-col items-center pt-[4px]">
        <svg class="w-[36px] h-[36px]" viewBox="0 0 36 36"><path d="M10 5l11-2 7 6H10z" fill="#f0f0f0"/><path d="M13 2h8l5 7h-13z" fill="#dcdcdc"/><path d="M1 11a1 1 0 0 1 1-1h10l2 2.500h20a1 1 0 0 1 1 1V33a1 1 0 0 1-1 1H2a1 1 0 0 1-1-1z" fill="#6fc3f2"/><path d="M1 13.500h34" stroke="#8ed4f8"/></svg>
      </div>
      <div class="w-[42.400px] flex flex-col items-center pt-[5px]">
        <svg class="w-[30px] h-[37px]" viewBox="0 0 30 37"><path d="M1 5l4 28c0 1.500 4 3 10 3s10-1.500 10-3l4-28z" fill="#d6dbe0"/><ellipse cx="15" cy="5" rx="14" ry="4" fill="#eef1f3" stroke="#c5cbd1" stroke-width=".8"/><path d="M8 10l1.500 22M15 10v24M22 10l-1.500 22" stroke="#c3c9cf" stroke-width=".7"/></svg>
      </div>
    </div>
  </footer>
</div>
</body>
</html>
